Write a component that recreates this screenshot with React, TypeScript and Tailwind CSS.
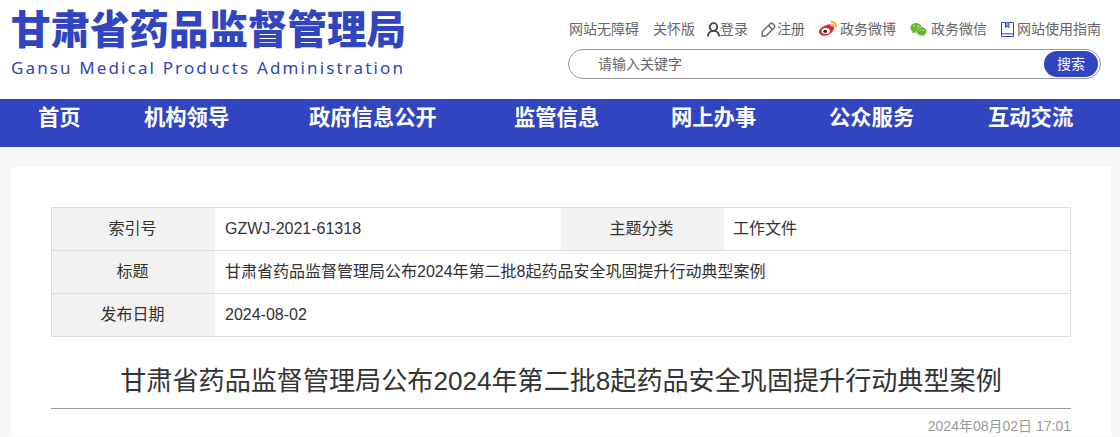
import { FaWeixin } from 'react-icons/fa';

const FONT = "font-['Liberation_Sans','Noto_Sans_CJK_SC',sans-serif]";

const navItems = [
  { label: '首页', cls: 'ml-[38px]' },
  { label: '机构领导', cls: 'ml-[63.4px]' },
  { label: '政府信息公开', cls: 'ml-[79.8px]' },
  { label: '监管信息', cls: 'ml-[77.2px]' },
  { label: '网上办事', cls: 'ml-[71.8px]' },
  { label: '公众服务', cls: 'ml-[72.8px]' },
  { label: '互动交流', cls: 'ml-[73.8px]' },
];

function UserIcon() {
  return (
    <svg width="13" height="15" viewBox="0 0 13 15" fill="none" stroke="#444" strokeWidth="1.8">
      <circle cx="6.5" cy="5" r="3.8" />
      <path d="M1 14.5c0-3.4 2-5.6 5.5-5.6s5.500 2.200 5.500 5.600" />
    </svg>
  );
}

function PencilIcon() {
  return (
    <svg width="15" height="15" viewBox="0 0 15 15" fill="none" stroke="#666" strokeWidth="1.4">
      <path d="M1.200 9.800 9 2a2.200 2.200 0 0 1 3.100 0l.9.900a2.200 2.200 0 0 1 0 3.100l-7.800 7.800-4 .4z" />
      <path d="M7.400 3.600l4 4" />
    </svg>
  );
}

function WeiboIcon() {
  return (
    <svg width="18" height="16" viewBox="0 0 18 16">
      <path
        d="M7.200 4.300C9 3 11.300 2.700 11.800 4c.2.600 0 1.100-.1 1.500 1.500-.5 3.300-.3 3.300 1.300 0 3.300-4.400 7.900-9.500 7.900C2.400 14.700 0 13 0 10.700 0 8.700 3.100 5.500 7.200 4.300z"
        fill="#d9262c"
      />
      <ellipse cx="6.800" cy="10" rx="4.200" ry="2.900" fill="#fff" />
      <ellipse cx="6.200" cy="10.300" rx="1.800" ry="1.600" fill="#222" />
      <path d="M12 1c2.800-.4 5.400 2 4.900 5.200" fill="none" stroke="#f5a623" strokeWidth="1.800" />
      <path d="M12.300 3.400c1.300-.2 2.500.9 2.200 2.400" fill="none" stroke="#f5a623" strokeWidth="1.400" />
    </svg>
  );
}

function BookIcon() {
  return (
    <svg width="13" height="15" viewBox="0 0 13 15" fill="none" stroke="#3045bf" strokeWidth="1">
      <path d="M.5.500h12v14H.5z" />
      <path d="M.5 11.800h12" />
      <path d="M4.500.5v5l1.700-1.200 1.700 1.200v-5" fill="#8f9ad9" />
    </svg>
  );
}

export default function App() {
  return (
    <div className={`${FONT} h-[437px] overflow-hidden bg-[#f6f7f9] text-[#333]`}>
      <header className="flex h-[99px] justify-between bg-white pl-[11px] pr-[19px]">
        <div>
          <h1 className="mt-[6px] whitespace-nowrap text-[39.5px] leading-[48px] font-black text-[#3045bf]">
            甘肃省药品监督管理局
          </h1>
          <p className="mt-[2px] text-[17px] leading-[24px] tracking-[2.13px] whitespace-nowrap text-[#3045bf] font-['Noto_Sans',sans-serif]">
            Gansu Medical Products Administration
          </p>
        </div>
        <div className="w-[533px]">
          <div className="mt-[19px] flex h-[20px] items-center pl-px text-sm whitespace-nowrap text-[#666]">
            <span>网站无障碍</span>
            <span className="ml-[14px]">关怀版</span>
            <span className="ml-[12px] flex items-center">
              <UserIcon />
              登录
            </span>
            <span className="ml-[13px] flex items-center">
              <PencilIcon />
              <span className="ml-px">注册</span>
            </span>
            <span className="ml-[14px] flex items-center">
              <WeiboIcon />
              <span className="ml-[3px]">政务微博</span>
            </span>
            <span className="ml-[14px] flex items-center">
              <FaWeixin className="text-[17px] text-[#5fb92c]" />
              <span className="ml-[4px]">政务微信</span>
            </span>
            <span className="ml-[14px] flex items-center">
              <BookIcon />
              <span className="ml-[3px]">网站使用指南</span>
            </span>
          </div>
          <div className="mt-[10px] flex h-[30px] items-center justify-between rounded-full border border-[#999] pr-[2px] pl-[29px] text-sm text-[#666]">
            <span>请输入关键字</span>
            <button className="h-[26px] w-[54px] rounded-full bg-[#3045bf] text-white">搜索</button>
          </div>
        </div>
      </header>

      <nav className="flex h-[48px] items-center bg-[#3045bf] pb-[8px] text-[21.3px] font-bold text-white">
        {navItems.map((item) => (
          <a key={item.label} className={`${item.cls} whitespace-nowrap`}>
            {item.label}
          </a>
        ))}
      </nav>

      <main className="mt-[20px] mr-[9px] ml-[11px] bg-white px-[40px] pt-[40px]">
        <div className="border border-[#ddd] text-base">
          <div className="flex h-[43px] border-b border-[#ddd]">
            <div className="flex w-[163px] items-center justify-center bg-[#f2f2f2] pr-[2px]">索引号</div>
            <div className="flex w-[346px] items-center pl-[10px]">GZWJ-2021-61318</div>
            <div className="flex w-[163px] items-center justify-center bg-[#f2f2f2] pr-[2px]">主题分类</div>
            <div className="flex flex-1 items-center pl-[9px]">工作文件</div>
          </div>
          <div className="flex h-[43px] border-b border-[#ddd]">
            <div className="flex w-[163px] items-center justify-center bg-[#f2f2f2] pr-[2px]">标题</div>
            <div className="flex flex-1 items-center pl-[10px]">
              甘肃省药品监督管理局公布2024年第二批8起药品安全巩固提升行动典型案例
            </div>
          </div>
          <div className="flex h-[42px]">
            <div className="flex w-[163px] items-center justify-center bg-[#f2f2f2] pr-[2px]">发布日期</div>
            <div className="flex flex-1 items-center pl-[10px]">2024-08-02</div>
          </div>
        </div>
        <h2 className="mt-[25px] border-b border-[#999] pb-[7px] text-center text-[26.1px] leading-[39px] whitespace-nowrap">
          甘肃省药品监督管理局公布2024年第二批8起药品安全巩固提升行动典型案例
        </h2>
        <p className="mt-[7px] text-right text-sm text-[#999]">2024年08月02日 17:01</p>
      </main>
    </div>
  );
}
